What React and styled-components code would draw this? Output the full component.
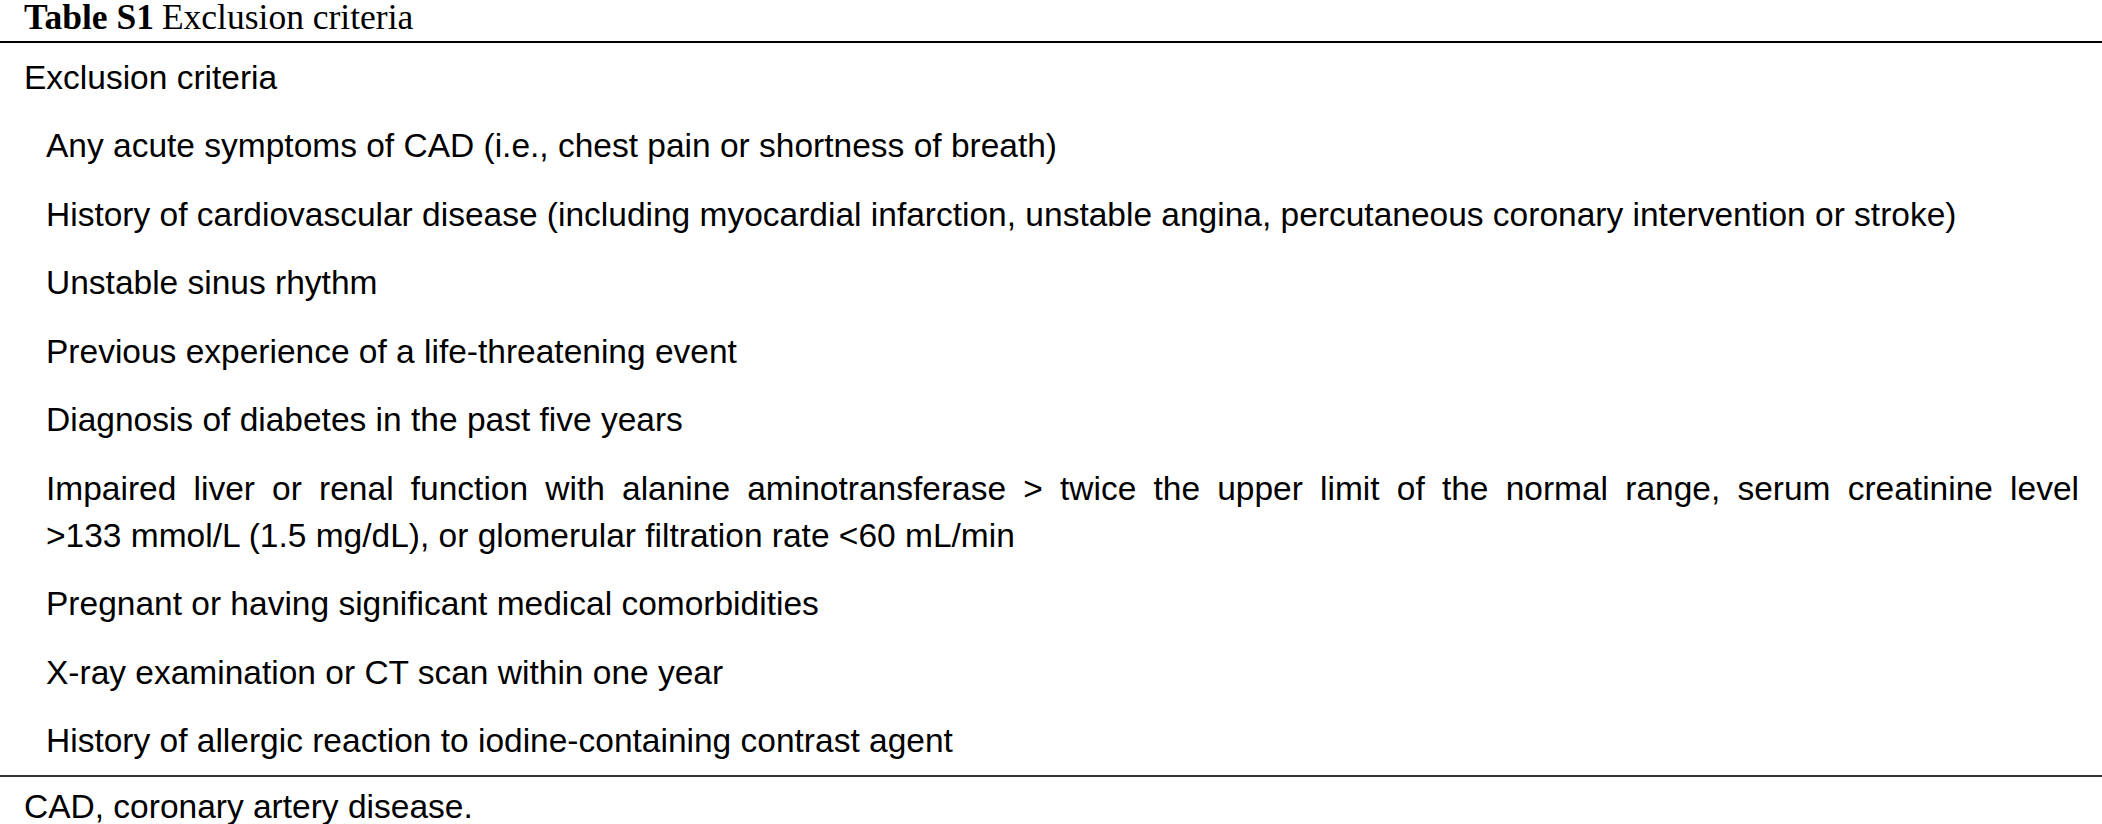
import React from "react";
import styled, { createGlobalStyle } from "styled-components";

const GlobalStyle = createGlobalStyle`
  html, body {
    margin: 0;
    padding: 0;
    background: #ffffff;
    overflow: hidden;
  }
  body {
    font-family: "Liberation Sans", Arial, sans-serif;
    color: #000;
  }
`;

const Page = styled.div`
  width: 2102px;
  display: flex;
  flex-direction: column;
`;

const Caption = styled.div`
  font-family: "Liberation Serif", "Times New Roman", serif;
  font-size: 35.5px;
  line-height: 34px;
  padding: 0 0 7px 24px;
  color: #000;
  white-space: nowrap;
`;

const CaptionLabel = styled.b`
  font-weight: 700;
  margin-right: 8px;
`;

const Table = styled.div`
  display: flex;
  flex-direction: column;
  border-top: 2px solid #000;
  border-bottom: 2px solid #333;
`;

const Row = styled.div`
  font-size: 33.5px;
  line-height: 47px;
  padding: 10.5px 23px 11px ${(p) => (p.$indent ? "46px" : "24px")};
  text-align: justify;
`;

const Footnote = styled.div`
  font-size: 33.5px;
  line-height: 47px;
  padding: 5.5px 23px 0 24px;
`;

const items = [
  "Any acute symptoms of CAD (i.e., chest pain or shortness of breath)",
  "History of cardiovascular disease (including myocardial infarction, unstable angina, percutaneous coronary intervention or stroke)",
  "Unstable sinus rhythm",
  "Previous experience of a life-threatening event",
  "Diagnosis of diabetes in the past five years",
  "Impaired liver or renal function with alanine aminotransferase > twice the upper limit of the normal range, serum creatinine level >133\u00A0mmol/L (1.5 mg/dL), or glomerular filtration rate <60 mL/min",
  "Pregnant or having significant medical comorbidities",
  "X-ray examination or CT scan within one year",
  "History of allergic reaction to iodine-containing contrast agent",
];

export default function App() {
  return (
    <Page>
      <GlobalStyle />
      <Caption>
        <CaptionLabel>Table S1</CaptionLabel>Exclusion criteria
      </Caption>
      <Table>
        <Row>Exclusion criteria</Row>
        {items.map((t) => (
          <Row key={t} $indent>
            {t}
          </Row>
        ))}
      </Table>
      <Footnote>CAD, coronary artery disease.</Footnote>
    </Page>
  );
}
